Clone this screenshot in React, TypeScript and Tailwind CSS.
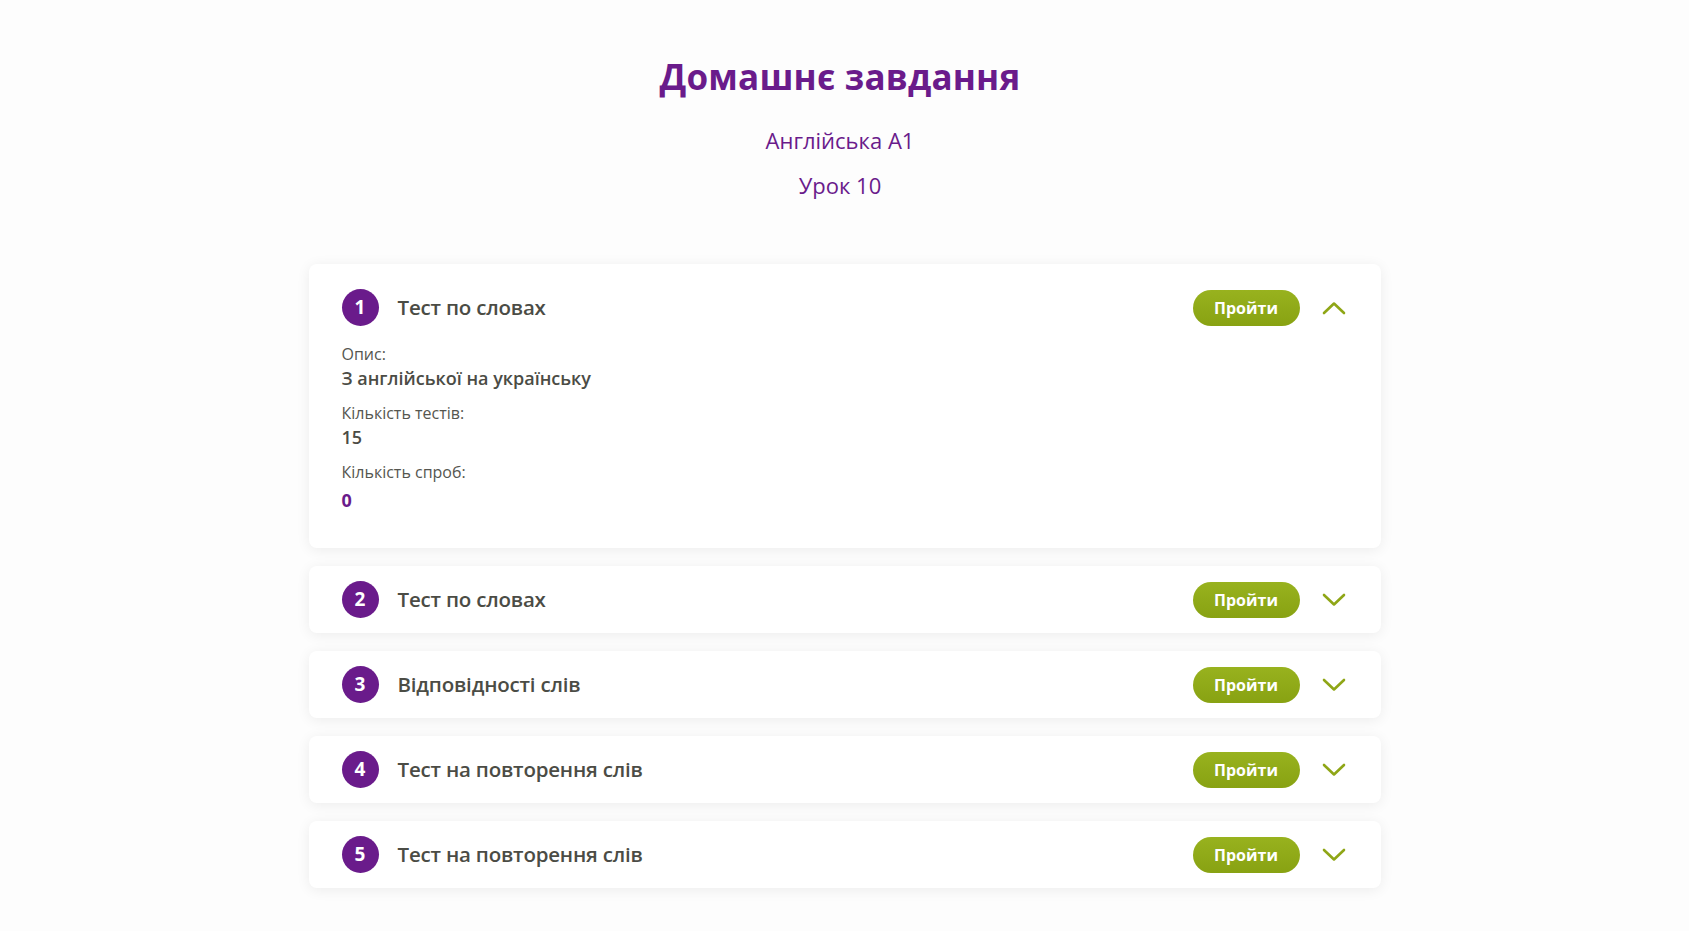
import React, { useState } from 'react';

type Task = {
  id: number;
  title: string;
  description: string;
  tests: number;
  attempts: number;
};

const tasks: Task[] = [
  { id: 1, title: 'Тест по словах', description: 'З англійської на українську', tests: 15, attempts: 0 },
  { id: 2, title: 'Тест по словах', description: 'З української на англійську', tests: 15, attempts: 0 },
  { id: 3, title: 'Відповідності слів', description: 'Знайдіть пари слів', tests: 10, attempts: 0 },
  { id: 4, title: 'Тест на повторення слів', description: 'Повторення слів уроку', tests: 20, attempts: 0 },
  { id: 5, title: 'Тест на повторення слів', description: 'Повторення слів уроку', tests: 20, attempts: 0 },
];

const Chevron: React.FC<{ open: boolean }> = ({ open }) => (
  <svg width="24" height="14" viewBox="0 0 24 14" fill="none" className="block">
    <path
      d={open ? 'M2 12 L12 2.5 L22 12' : 'M2 2 L12 11.5 L22 2'}
      stroke="#8fa616"
      strokeWidth="2.6"
      strokeLinecap="round"
      strokeLinejoin="round"
    />
  </svg>
);

const TaskCard: React.FC<{ task: Task; open: boolean; onToggle: () => void }> = ({ task, open, onToggle }) => (
  <div className="bg-white rounded-[8px] shadow-[0_2px_14px_rgba(0,0,0,0.07)] px-[33px]">
    <div className={`flex items-center ${open ? 'pt-[25px]' : 'py-[15px]'}`}>
      <div className="w-[37px] h-[37px] rounded-full bg-[#6a1b8b] text-white flex items-center justify-center text-[19px] font-bold">
        {task.id}
      </div>
      <div className="ml-[19px] text-[20.5px] font-semibold text-[#4b4c45] tracking-[-0.2px]">{task.title}</div>
      <button className="ml-auto w-[107px] h-[36px] rounded-full bg-gradient-to-b from-[#98b21e] to-[#88a212] text-white text-[16px] font-bold">
        Пройти
      </button>
      <button onClick={onToggle} className="ml-[22px] mr-[2px] w-[24px] flex items-center justify-center">
        <Chevron open={open} />
      </button>
    </div>
    {open && (
      <div className="pt-[17px] pb-[36px]">
        <div className="text-[16px] leading-[22px] text-[#55564f]">Опис:</div>
        <div className="mt-[1px] text-[18px] leading-[24px] font-semibold text-[#4b4c45]">{task.description}</div>
        <div className="mt-[12px] text-[16px] leading-[22px] text-[#55564f]">Кількість тестів:</div>
        <div className="mt-[1px] text-[18px] leading-[24px] font-semibold text-[#4b4c45]">{task.tests}</div>
        <div className="mt-[12px] text-[16px] leading-[22px] text-[#55564f]">Кількість спроб:</div>
        <div className="mt-[5px] text-[18px] leading-[24px] font-bold text-[#6a1b8b]">{task.attempts}</div>
      </div>
    )}
  </div>
);

export default function App() {
  const [openId, setOpenId] = useState<number | null>(1);

  return (
    <div className="min-h-screen bg-[#fdfdfd] font-['Open_Sans',sans-serif] pt-[57px] pb-[43px]">
      <div className="pr-[9px] text-center text-[#6a1b8b]">
        <h1 className="text-[35px] leading-[40px] font-bold tracking-[0.2px]">Домашнє завдання</h1>
        <div className="mt-[29px] text-[22px] leading-[28px]">Англійська А1</div>
        <div className="mt-[17px] text-[22px] leading-[28px]">Урок 10</div>
      </div>

      <div className="mt-[65px] mx-auto w-[1072px] flex flex-col gap-[18px]">
        {tasks.map((t) => (
          <TaskCard
            key={t.id}
            task={t}
            open={openId === t.id}
            onToggle={() => setOpenId(openId === t.id ? null : t.id)}
          />
        ))}
      </div>
    </div>
  );
}
